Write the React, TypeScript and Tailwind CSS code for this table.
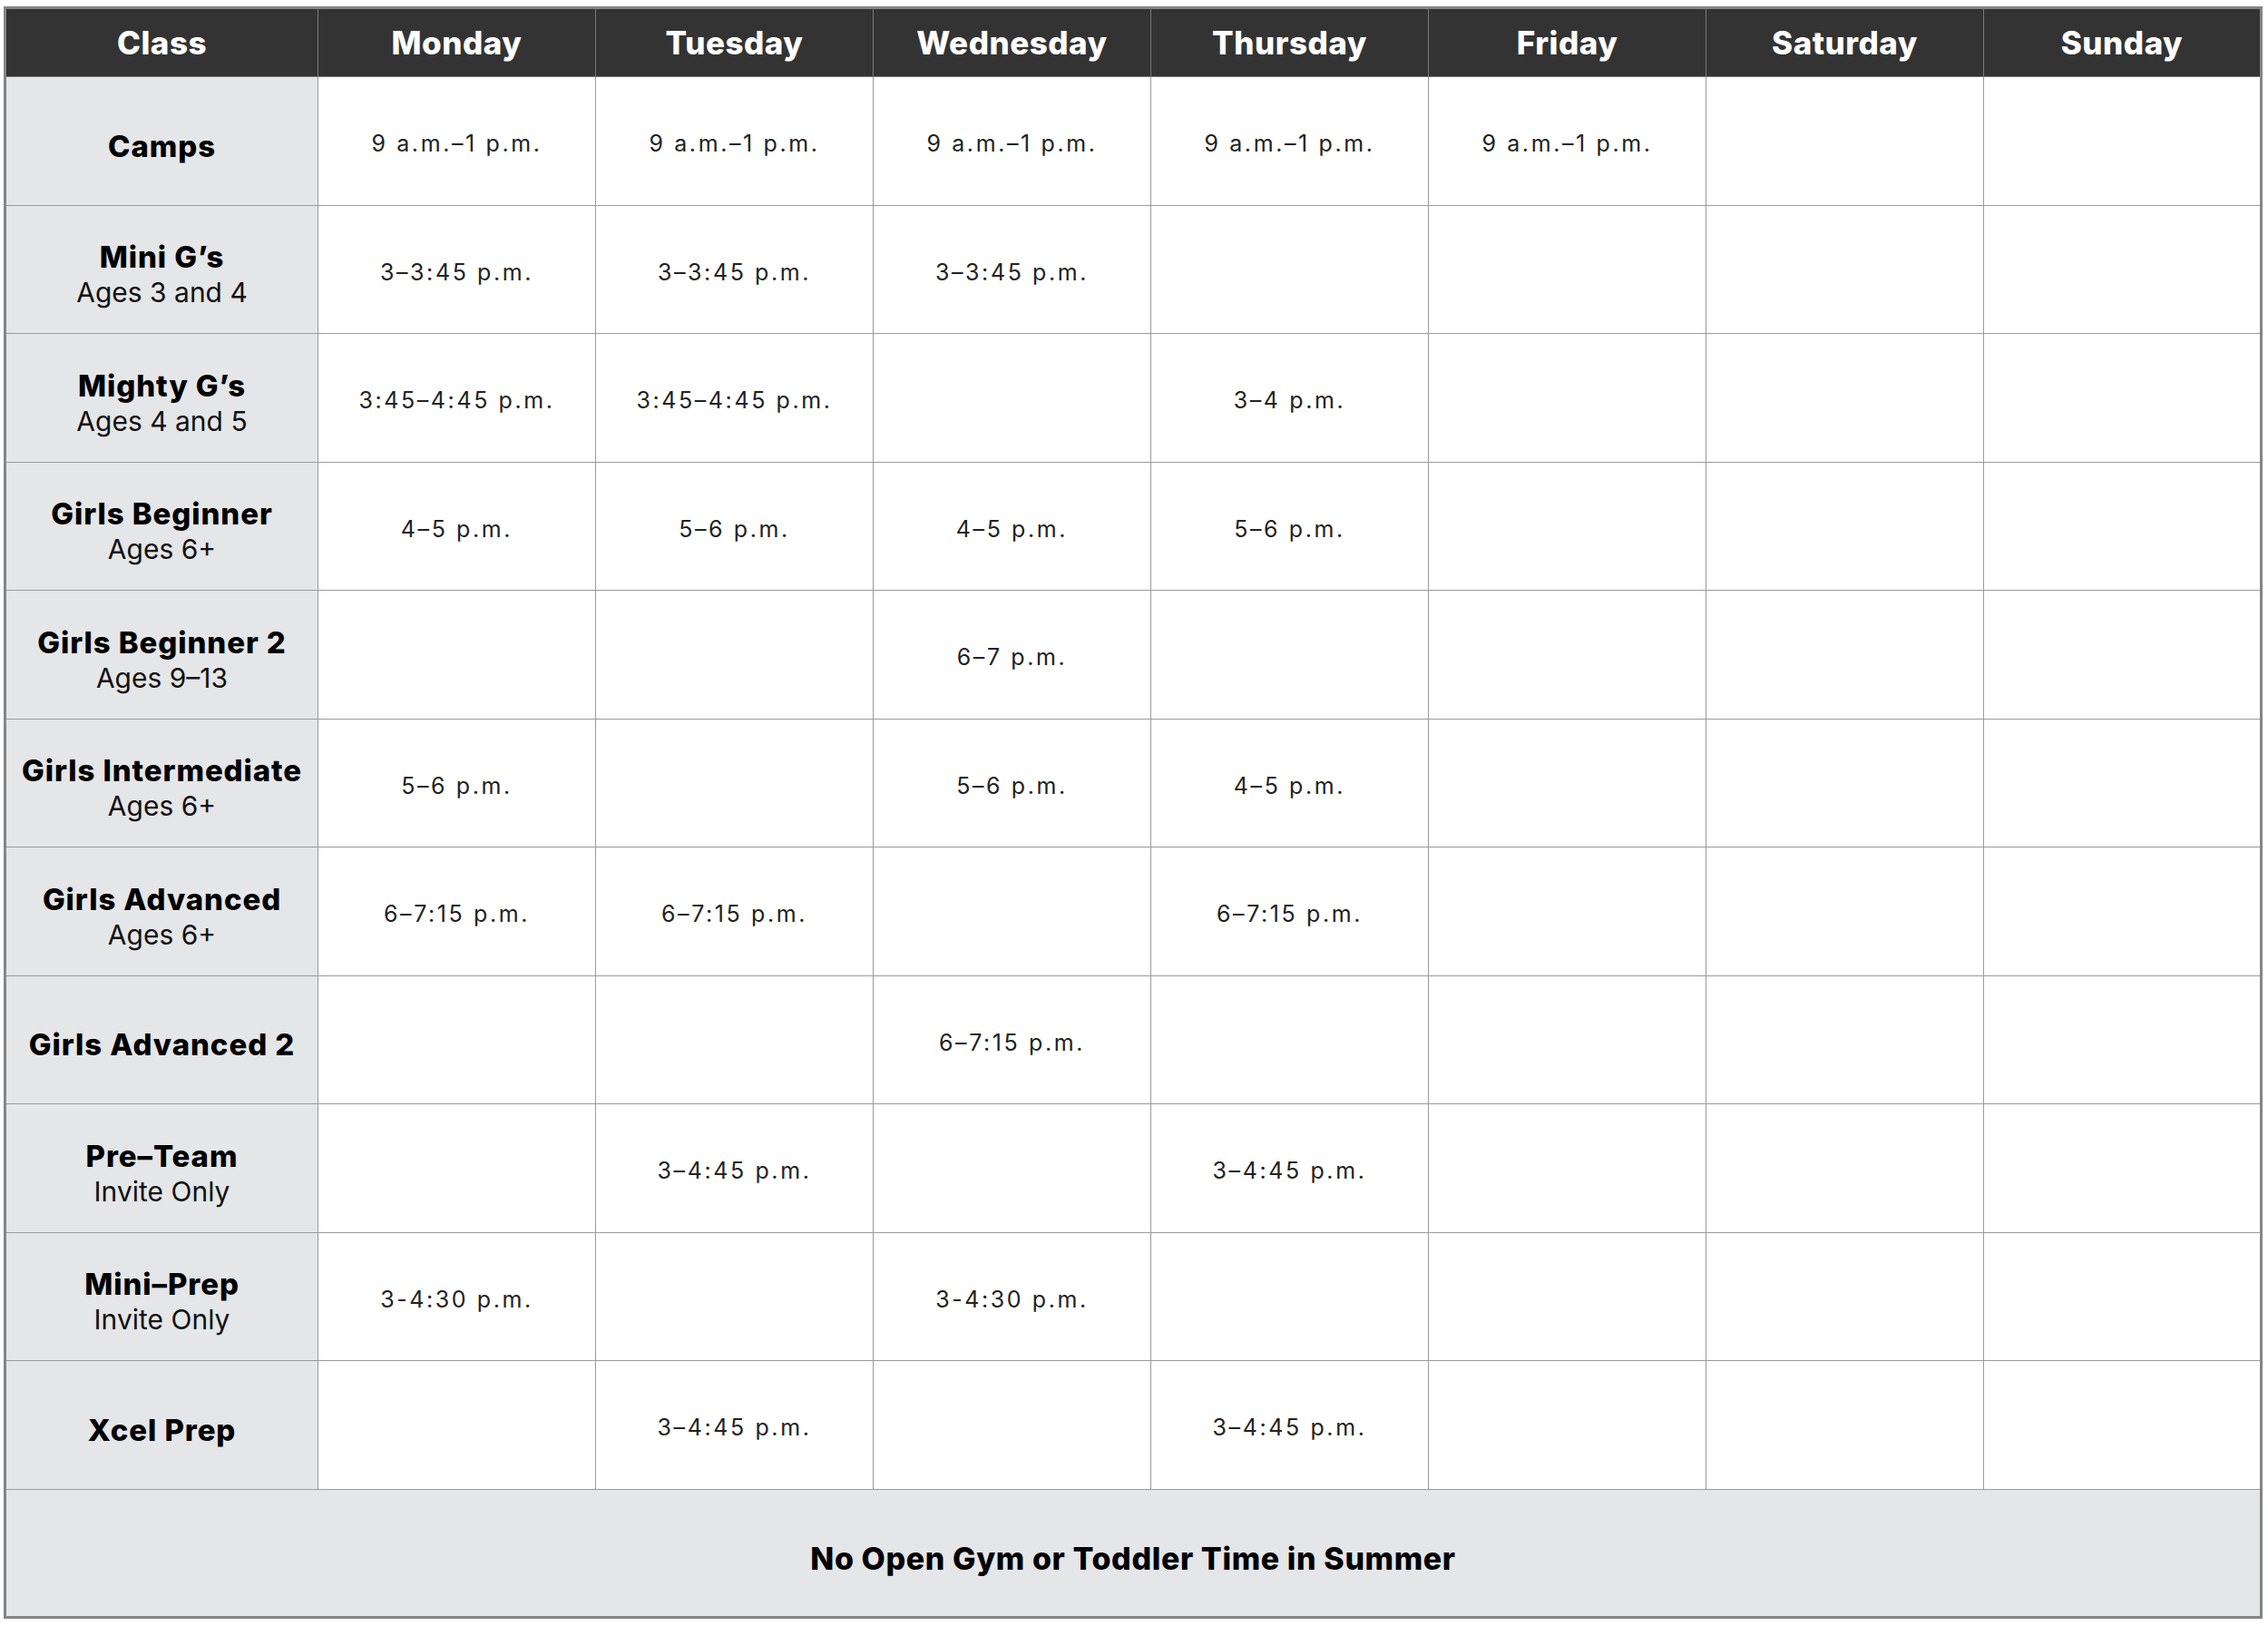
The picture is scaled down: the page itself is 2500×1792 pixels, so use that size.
const days = ["Monday", "Tuesday", "Wednesday", "Thursday", "Friday", "Saturday", "Sunday"];

interface Row {
  name: string;
  sub?: string;
  times: string[];
}

const rows: Row[] = [
  { name: "Camps", times: ["9 a.m.–1 p.m.", "9 a.m.–1 p.m.", "9 a.m.–1 p.m.", "9 a.m.–1 p.m.", "9 a.m.–1 p.m."] },
  { name: "Mini G’s", sub: "Ages 3 and 4", times: ["3–3:45 p.m.", "3–3:45 p.m.", "3–3:45 p.m."] },
  { name: "Mighty G’s", sub: "Ages 4 and 5", times: ["3:45–4:45 p.m.", "3:45–4:45 p.m.", "", "3–4 p.m."] },
  { name: "Girls Beginner", sub: "Ages 6+", times: ["4–5 p.m.", "5–6 p.m.", "4–5 p.m.", "5–6 p.m."] },
  { name: "Girls Beginner 2", sub: "Ages 9–13", times: ["", "", "6–7 p.m."] },
  { name: "Girls Intermediate", sub: "Ages 6+", times: ["5–6 p.m.", "", "5–6 p.m.", "4–5 p.m."] },
  { name: "Girls Advanced", sub: "Ages 6+", times: ["6–7:15 p.m.", "6–7:15 p.m.", "", "6–7:15 p.m."] },
  { name: "Girls Advanced 2", times: ["", "", "6–7:15 p.m."] },
  { name: "Pre–Team", sub: "Invite Only", times: ["", "3–4:45 p.m.", "", "3–4:45 p.m."] },
  { name: "Mini–Prep", sub: "Invite Only", times: ["3-4:30 p.m.", "", "3-4:30 p.m."] },
  { name: "Xcel Prep", times: ["", "3–4:45 p.m.", "", "3–4:45 p.m."] },
];

export default function App() {
  return (
    <div className="min-h-screen bg-white pt-[7px] pl-[4px] font-['Inter','Liberation_Sans',sans-serif]">
      <table className="table-fixed border-collapse w-[2490px] border-[3px] border-[#858585]">
        <colgroup>
          <col className="w-[345px]" />
          {days.map((d) => (
            <col key={d} />
          ))}
        </colgroup>
        <thead>
          <tr className="h-[76px] bg-[#333333]">
            <th className="border border-[#777777] text-white text-[35px] font-extrabold tracking-[0.5px]">
              Class
            </th>
            {days.map((d) => (
              <th
                key={d}
                className="border border-[#777777] text-white text-[35px] font-extrabold tracking-[0.5px]"
              >
                {d}
              </th>
            ))}
          </tr>
        </thead>
        <tbody>
          {rows.map((r) => (
            <tr key={r.name} className="h-[141.5px]">
              <td className="border border-[#9a9a9a] bg-[#e5e6e8] text-center text-black pt-[12px]">
                <div className="text-[33px] font-extrabold leading-[39px] tracking-[0.9px]">{r.name}</div>
                {r.sub && <div className="text-[30px] leading-[38px] text-[#111]">{r.sub}</div>}
              </td>
              {days.map((d, i) => (
                <td
                  key={d}
                  className="border border-[#9a9a9a] bg-white text-center text-[25px] tracking-[2.6px] text-[#222] pt-[7px]"
                >
                  {r.times[i] ?? ""}
                </td>
              ))}
            </tr>
          ))}
          <tr className="h-[141px]">
            <td
              colSpan={8}
              className="border border-[#9a9a9a] bg-[#e5e6e8] text-center text-[34px] font-extrabold tracking-[0.6px] text-black pt-[12px]"
            >
              No Open Gym or Toddler Time in Summer
            </td>
          </tr>
        </tbody>
      </table>
    </div>
  );
}
